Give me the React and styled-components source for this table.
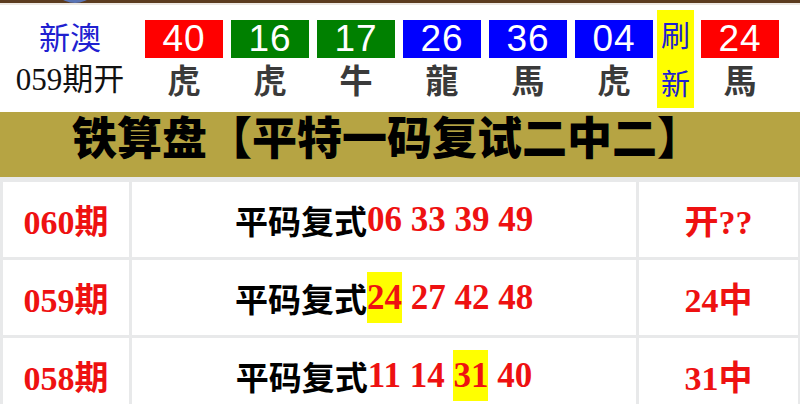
import React from "react";
import styled, { createGlobalStyle } from "styled-components";

const GlobalStyle = createGlobalStyle`
  body {
    margin: 0;
    background: #ffffff;
    font-family: "Noto Sans CJK SC", sans-serif;
  }
`;

const Page = styled.div`
  width: 800px;
  height: 404px;
  overflow: hidden;
  position: relative;
  background: #fff;
`;

const TopStrip = styled.div`
  height: 3px;
  background: #5b3b1f;
  border-bottom: 2px solid #ece7e2;
`;

const Avatar = styled.div`
  position: absolute;
  top: -47px;
  left: 50px;
  width: 50px;
  height: 50px;
  border-radius: 50%;
  background: #5a74b4;
`;

const Header = styled.div`
  display: flex;
  align-items: flex-start;
  height: 107px;
`;

const Issue = styled.div`
  width: 140px;
  padding-top: 11px;
  display: flex;
  flex-direction: column;
  align-items: center;
`;

const Brand = styled.div`
  font-size: 31px;
  line-height: 40px;
  color: #2020d0;
`;

const IssueNo = styled.div`
  margin-top: 4px;
  font-family: "Liberation Serif", "Noto Sans CJK SC", serif;
  font-size: 31px;
  line-height: 40px;
  color: #111;
`;

const Balls = styled.div`
  display: flex;
  align-items: flex-start;
  padding-left: 5px;
`;

const BallCol = styled.div`
  width: 78px;
  margin-right: ${({ $gap }) => $gap}px;
  padding-top: 15px;
  display: flex;
  flex-direction: column;
  align-items: center;
`;

const Ball = styled.div`
  width: 78px;
  height: 38px;
  background: ${({ $c }) => $c};
  color: #fff;
  font-family: "Liberation Sans", Arial, sans-serif;
  font-size: 37px;
  line-height: 38px;
  text-align: center;
  letter-spacing: 1px;
`;

const Zodiac = styled.div`
  margin-top: 2px;
  font-size: 33px;
  line-height: 38px;
  color: #3a3a3a;
  font-weight: 700;
  font-family: "Noto Sans CJK TC", "Noto Sans CJK SC", sans-serif;
`;

const Refresh = styled.div`
  margin-top: 5px;
  margin-right: 7px;
  width: 37px;
  height: 98px;
  background: #ffff00;
  color: #2020d0;
  font-size: 29px;
  line-height: 48px;
  text-align: center;
`;

const Banner = styled.div`
  height: 65px;
  background: #b6a443;
  padding-left: 72px;
  font-size: 45px;
  line-height: 48px;
  font-weight: 900;
  color: #000;
  white-space: nowrap;
`;

const Table = styled.div`
  display: grid;
  grid-template-columns: 126px 504px 159px;
  grid-auto-rows: 75px;
  gap: 3px;
  padding: 5px 3px 0 3px;
  background: #e8e9ea;
`;

const Cell = styled.div`
  background: #fff;
  display: flex;
  align-items: center;
  justify-content: center;
  white-space: nowrap;
`;

const Red = styled.span`
  font-family: "Liberation Serif", "Noto Sans CJK SC", serif;
  font-weight: 700;
  font-size: ${({ $size }) => $size || 34}px;
  color: #ee1111;
`;

const Label = styled.span`
  font-weight: 700;
  font-size: 33px;
  color: #000;
`;

const Hit = styled.span`
  background: #ffff00;
  padding: 6px 0;
`;

const balls = [
  { n: "40", z: "虎", c: "#ff0000", gap: 8 },
  { n: "16", z: "虎", c: "#008000", gap: 8 },
  { n: "17", z: "牛", c: "#008000", gap: 8 },
  { n: "26", z: "龍", c: "#0000ff", gap: 8 },
  { n: "36", z: "馬", c: "#0000ff", gap: 8 },
  { n: "04", z: "虎", c: "#0000ff", gap: 4 },
];

const rows = [
  { no: "060期", nums: ["06", "33", "39", "49"], hit: null, res: "开??" },
  { no: "059期", nums: ["24", "27", "42", "48"], hit: "24", res: "24中" },
  { no: "058期", nums: ["11", "14", "31", "40"], hit: "31", res: "31中" },
];

export default function App() {
  return (
    <Page>
      <GlobalStyle />
      <TopStrip />
      <Avatar />
      <Header>
        <Issue>
          <Brand>新澳</Brand>
          <IssueNo>059期开</IssueNo>
        </Issue>
        <Balls>
          {balls.map((b, i) => (
            <BallCol key={i} $gap={b.gap}>
              <Ball $c={b.c}>{b.n}</Ball>
              <Zodiac>{b.z}</Zodiac>
            </BallCol>
          ))}
          <Refresh>
            刷<br />新
          </Refresh>
          <BallCol $gap={0}>
            <Ball $c="#ff0000">24</Ball>
            <Zodiac>馬</Zodiac>
          </BallCol>
        </Balls>
      </Header>
      <Banner>铁算盘【平特一码复试二中二】</Banner>
      <Table>
        {rows.map((r) => (
          <React.Fragment key={r.no}>
            <Cell>
              <Red>{r.no}</Red>
            </Cell>
            <Cell>
              <Label>平码复式</Label>
              <Red $size={35}>
                {r.nums.map((n, i) => (
                  <React.Fragment key={n}>
                    {i > 0 && " "}
                    {n === r.hit ? <Hit>{n}</Hit> : n}
                  </React.Fragment>
                ))}
              </Red>
            </Cell>
            <Cell>
              <Red>{r.res}</Red>
            </Cell>
          </React.Fragment>
        ))}
      </Table>
    </Page>
  );
}
